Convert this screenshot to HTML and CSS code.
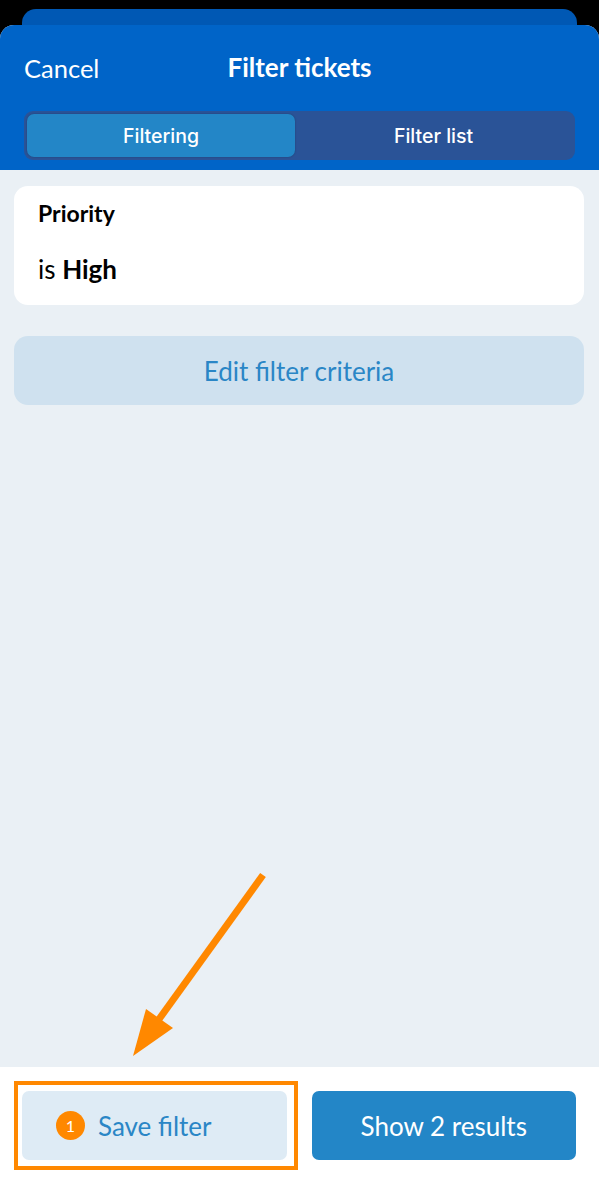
FILE: index.html
```html
<!DOCTYPE html>
<html lang="en">
<head>
    <meta charset="UTF-8">
    <meta name="viewport" content="width=device-width, initial-scale=1.0">
    <title>Filter tickets</title>
    <link rel="stylesheet" href="styles.css">
</head>
<body>
    <!-- card of the screen underneath the sheet -->
    <div class="peek"></div>

    <div class="sheet">
        <header class="sheet-header">
            <div class="nav">
                <span class="nav-cancel">Cancel</span>
                <span class="nav-title">Filter tickets</span>
            </div>
            <div class="segmented">
                <div class="segment active">Filtering</div>
                <div class="segment">Filter list</div>
            </div>
        </header>

        <main class="content">
            <div class="criteria-card">
                <div class="criteria-field">Priority</div>
                <div class="criteria-value">is <strong>High</strong></div>
            </div>
            <button class="edit-btn">Edit filter criteria</button>
        </main>

        <footer class="footer">
            <div class="save-wrap">
                <button class="btn btn-save">
                    <span class="step">1</span>
                    Save filter
                </button>
                <div class="highlight"></div>
            </div>
            <button class="btn btn-show">Show 2 results</button>
        </footer>

        <!-- annotation arrow pointing at the save button -->
        <svg class="arrow" width="599" height="1201" viewBox="0 0 599 1201">
            <line x1="263" y1="875" x2="157" y2="1022" stroke="#ff8800" stroke-width="7"/>
            <polygon points="133,1056 146,1009 173,1028" fill="#ff8800"/>
        </svg>
    </div>
</body>
</html>
```

FILE: styles.css
```css
* {
    box-sizing: border-box;
    margin: 0;
    padding: 0;
}
body {
    font-family: Lato, "Noto Sans", sans-serif;
    background-color: #000;
    width: 599px;
    height: 1201px;
    overflow: hidden;
}
.peek {
    margin: 9px 22px 0;
    height: 16px;
    background-color: #0058b4;
    border-radius: 14px 14px 0 0;
}
.sheet {
    position: relative;
    height: 1176px;
    display: flex;
    flex-direction: column;
    background-color: #fff;
    border-radius: 14px 14px 0 0;
    overflow: hidden;
}
.sheet-header {
    background-color: #0064c8;
    height: 145px;
    padding: 0 24px;
}
.nav {
    position: relative;
    height: 86px;
    display: flex;
    align-items: center;
    justify-content: center;
    color: #fff;
    font-size: 25.5px;
    padding-bottom: 2px;
}
.nav-cancel {
    position: absolute;
    left: 0;
    top: 28px;
}
.nav-title {
    font-size: 26px;
    font-weight: 700;
}
.segmented {
    display: flex;
    height: 49px;
    padding: 3px;
    background-color: #2a5397;
    border-radius: 9px;
}
.segment {
    flex: 1;
    display: flex;
    align-items: center;
    justify-content: center;
    color: #fff;
    font-family: Inter, Roboto, sans-serif;
    font-size: 19.5px;
    font-weight: 500;
    border-radius: 7px;
}
.segment.active {
    flex: 0 0 268px;
    background-color: #2386c7;
    box-shadow: 0 0 2px rgba(0, 0, 0, 0.25);
}
.content {
    height: 897px;
    background-color: #eaf0f5;
    padding: 16px 15px 0 14px;
}
.criteria-card {
    background-color: #fff;
    border-radius: 14px;
    height: 119px;
    padding: 13px 24px 0;
}
.criteria-field {
    font-size: 23px;
    font-weight: 700;
    color: #000;
}
.criteria-value {
    margin-top: 26px;
    font-size: 26px;
    color: #000;
}
.edit-btn {
    display: block;
    width: 100%;
    height: 69px;
    margin-top: 31px;
    border: none;
    border-radius: 14px;
    background-color: #cfe1ef;
    color: #2a86c6;
    font-family: Lato, sans-serif;
    font-size: 26px;
}
.footer {
    flex: 1;
    display: flex;
    align-items: flex-start;
    gap: 25px;
    padding: 24px 23px 0 22px;
    background-color: #fff;
}
.save-wrap {
    position: relative;
    flex: 1;
}
.btn {
    height: 69px;
    border: none;
    border-radius: 7px;
    font-family: Lato, sans-serif;
    font-size: 26px;
}
.btn-save {
    width: 100%;
    display: flex;
    align-items: center;
    gap: 13px;
    padding-left: 34px;
    background-color: #deebf5;
    color: #2a86c6;
}
.btn-show {
    flex: 1;
    background-color: #2386c7;
    color: #fff;
}
.step {
    flex-shrink: 0;
    width: 29px;
    height: 29px;
    border-radius: 50%;
    background-color: #ff8800;
    color: #fff;
    font-size: 16px;
    display: flex;
    align-items: center;
    justify-content: center;
}
.highlight {
    position: absolute;
    left: -8px;
    top: -10px;
    right: -11px;
    bottom: -10px;
    border: 4px solid #ff8800;
}
.arrow {
    position: absolute;
    left: 0;
    top: -25px;
    pointer-events: none;
}
```
